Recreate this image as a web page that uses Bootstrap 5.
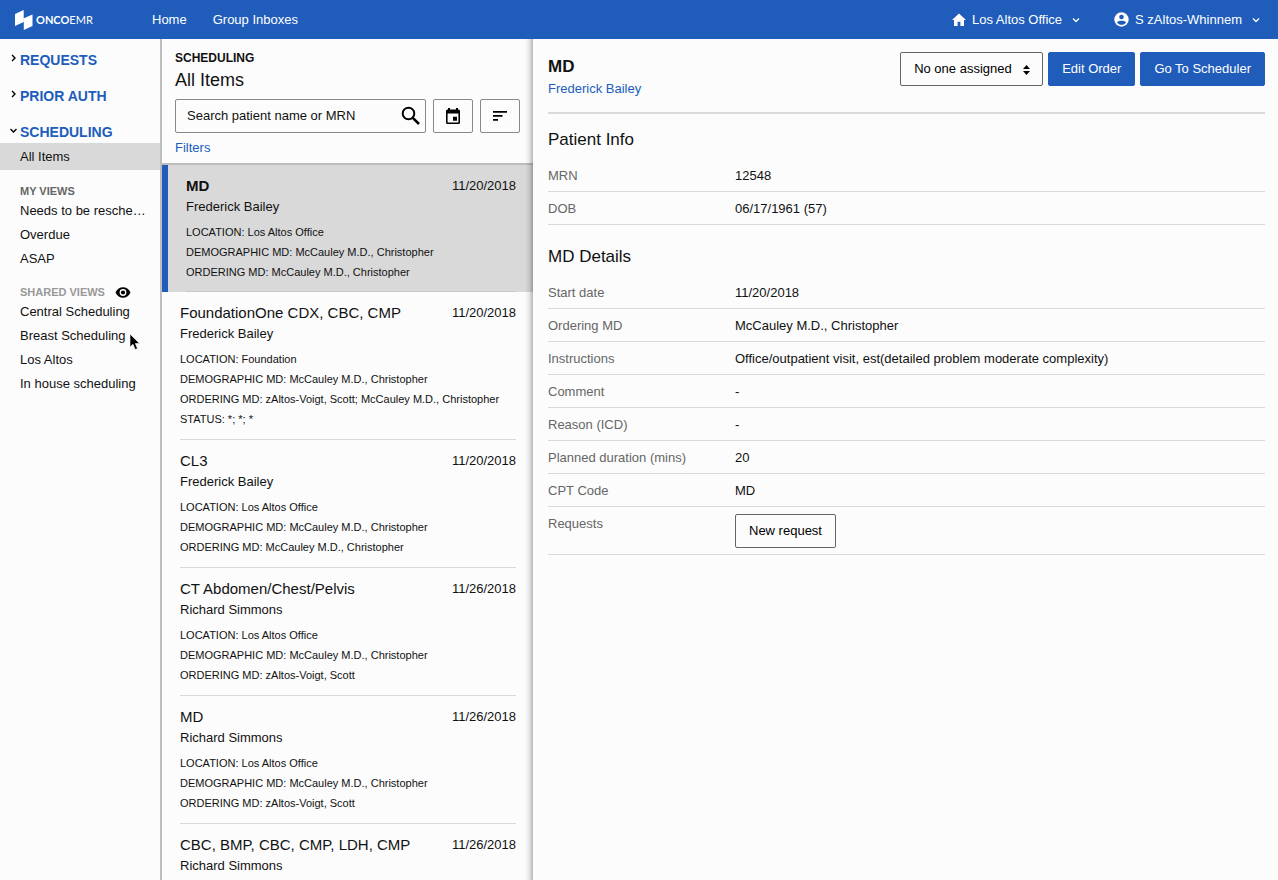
<!DOCTYPE html>
<html lang="en">
<head>
<meta charset="utf-8">
<meta name="viewport" content="width=device-width, initial-scale=1">
<title>OncoEMR - Scheduling</title>
<link rel="stylesheet" href="https://cdn.jsdelivr.net/npm/bootstrap@5.3.0/dist/css/bootstrap.min.css">
<style>
  :root { --brand: #205dbb; --ink: #111; --page: #fcfcfc; --line: #dadada; --rule: #bdbdbd; --picked: #d9d9d9; }
  body { font: 13px/20px "Liberation Sans", Arial, sans-serif; color: var(--ink); background: var(--page); }
  a { color: var(--brand); text-decoration: none; }
  svg { display: block; flex: none; }
  ul { list-style: none; margin: 0; padding: 0; }

  .topbar { height: 39px; background: var(--brand); padding: 0 18px 0 15px; }
  .topbar a, .topbar button { color: #fff; font-size: 13px; line-height: 20px; background: none; border: 0; padding: 0; }
  .topbar .brand-word { font: 700 11px/20px Lato, sans-serif; margin-left: 3px; }
  .brand-word span { font-weight: 400; }
  .brand-link { width: 137px; }
  .main-links { gap: 26px; }
  .account-links { gap: 34px; }
  .account-links button { gap: 6px; }

  .sidebar { width: 162px; border-right: 2px solid var(--rule); padding-top: 10px; }
  .group-toggle { font-weight: 700; font-size: 14px; line-height: 22px; color: var(--brand); background: none; border: 0; padding: 0 0 0 9px; margin: 0 0 14px; gap: 2px; }
  .group-toggle.open { margin-bottom: 0; }
  .group-toggle svg { margin-top: 5px; }
  .sidebar li a { color: var(--ink); display: block; padding: 0 14px 0 20px; line-height: 24px; }
  .sidebar li a.picked { background: var(--picked); line-height: 27px; }
  .side-title { font-size: 11px; line-height: 16px; font-weight: 700; color: #666; margin: 13px 0 0; padding-left: 20px; }
  .side-title.shared { color: #999; gap: 10px; }

  .queue { width: 371px; }
  .queue::after { content: ""; position: absolute; inset: 0 0 0 auto; width: 8px; background: linear-gradient(to right, rgba(0,0,0,0), rgba(0,0,0,.08) 50%, rgba(0,0,0,.28)); pointer-events: none; }
  .queue-head { padding: 9px 13px 5px; border-bottom: 2px solid var(--rule); }
  .queue-head .eyebrow { font-size: 12px; line-height: 20px; font-weight: 700; }
  .queue-head h1 { font-size: 18px; line-height: 24px; font-weight: 400; margin: 0 0 7px; }
  .tools { gap: 7px; margin-bottom: 5px; }
  .tools input { height: 34px; width: 100%; border: 1px solid #888; border-radius: 2px; padding: 0 36px 2px 11px; background: var(--page); color: var(--ink); font-size: 13px; }
  .tools input::placeholder { color: var(--ink); opacity: 1; }
  .tools .glass { right: 5px; top: 7px; }
  .tool-btn { width: 40px; height: 34px; border: 1px solid #888; border-radius: 2px; background: var(--page); padding: 0; color: #000; }

  .order { padding: 0 17px 0 18px; }
  .order > div { padding: 10px 0; border-bottom: 1px solid var(--line); }
  .order.picked { background: var(--picked); border-left: 6px solid var(--brand); }
  .order.picked > div { border-color: #c8c8c8; padding-bottom: 9px; }
  .order h2 { font-size: 15px; line-height: 22px; font-weight: 400; margin: 0; }
  .order.picked h2 { font-weight: 700; }
  .order time { line-height: 22px; }
  .order ul { font-size: 11px; line-height: 20px; margin-top: 5px; }

  .detail { padding: 13px 13px 0 15px; }
  .detail-head { border-bottom: 2px solid var(--line); margin-bottom: 14px; min-height: 62px; }
  .detail-head h1 { font-size: 17px; line-height: 24px; font-weight: 700; margin: 3px 0 0; }
  .detail-head a { line-height: 20px; display: block; }
  .actions { gap: 5px; }
  .btn-emr, .assignee { height: 34px; font-size: 13px; line-height: 20px; border-radius: 2px; border: 1px solid var(--brand); padding: 0 13px; }
  .btn-emr { background: var(--brand); color: #fff; }
  .btn-plain, .assignee { background: var(--page); color: #000; border-color: #666; }
  .assignee { appearance: none; width: 143px; }
  .updown { right: 13px; top: 13px; pointer-events: none; }
  .detail section + section { margin-top: 20px; }
  .detail h2 { font-size: 17px; line-height: 24px; font-weight: 400; margin: 0 0 7px; }
  .facts { width: 100%; }
  .facts tr { border-bottom: 1px solid var(--line); }
  .facts th { width: 187px; font-weight: 400; color: #666; }
  .facts th, .facts td { line-height: 16px; padding: 9px 0 7px; vertical-align: top; }
  .facts td.has-button { padding: 7px 0 6px; }
  .pointer { left: 129px; top: 333px; pointer-events: none; z-index: 5; }
</style>
</head>
<body>
<div class="d-flex flex-column vh-100 overflow-hidden position-relative">
  <header class="topbar d-flex align-items-center flex-shrink-0">
    <a href="#" class="brand-link d-flex align-items-center" aria-label="OncoEMR">
      <svg width="18" height="20" viewBox="0 0 18 20" fill="#fff"><path d="M0 4 8.700 0V12L0 16ZM8.800 8.300 17.500 4.500V16L8.800 20Z"/></svg>
      <span class="brand-word">ONCO<span>EMR</span></span>
    </a>
    <nav class="main-links d-flex"><a href="#">Home</a><a href="#">Group Inboxes</a></nav>
    <div class="account-links d-flex ms-auto">
      <button type="button" class="d-flex align-items-center">
        <svg width="14" height="13" viewBox="0 0 14 13" fill="#fff"><path d="M7 0.500 0 7H2V13H5.600V8.800H8.400V13H12V7H14Z"/></svg>
        Los Altos Office
        <svg class="ms-1" width="8" height="6" viewBox="0 0 8 6" fill="none" stroke="#fff" stroke-width="1.300"><path d="M1 1.500 4 4.500 7 1.500"/></svg>
      </button>
      <button type="button" class="d-flex align-items-center">
        <svg width="15" height="15" viewBox="0 0 15 15"><circle cx="7.500" cy="7.500" r="7.200" fill="#fff"/><circle cx="7.500" cy="5" r="2.300" fill="#205dbb"/><path d="M3 10.500C3.400 8.300 11.600 8.300 12 10.500 10 13.600 5 13.600 3 10.500Z" fill="#205dbb"/></svg>
        S zAltos-Whinnem
        <svg class="ms-1" width="8" height="6" viewBox="0 0 8 6" fill="none" stroke="#fff" stroke-width="1.300"><path d="M1 1.500 4 4.500 7 1.500"/></svg>
      </button>
    </div>
  </header>

  <div class="d-flex flex-grow-1 overflow-hidden">
    <nav class="sidebar flex-shrink-0" aria-label="Queues">
      <button type="button" class="group-toggle d-flex align-items-start"><svg width="9" height="9" viewBox="0 0 9 9" fill="none" stroke="#000" stroke-width="1.400"><path d="M3 1 6 4 3 7"/></svg>REQUESTS</button>
      <button type="button" class="group-toggle d-flex align-items-start"><svg width="9" height="9" viewBox="0 0 9 9" fill="none" stroke="#000" stroke-width="1.400"><path d="M3 1 6 4 3 7"/></svg>PRIOR AUTH</button>
      <button type="button" class="group-toggle open d-flex align-items-start"><svg width="9" height="9" viewBox="0 0 9 9" fill="none" stroke="#000" stroke-width="1.400"><path d="M1.500 3 4.500 6 7.500 3"/></svg>SCHEDULING</button>
      <ul><li><a href="#" class="picked">All Items</a></li></ul>
      <h3 class="side-title">MY VIEWS</h3>
      <ul>
        <li><a href="#" class="text-nowrap">Needs to be resche…</a></li>
        <li><a href="#">Overdue</a></li>
        <li><a href="#">ASAP</a></li>
      </ul>
      <h3 class="side-title shared d-flex align-items-center">SHARED VIEWS
        <svg width="16" height="11" viewBox="0 0 16 11"><path d="M0.500 5.500C3.500-1.500 12.500-1.500 15.500 5.500 12.500 12.500 3.500 12.500 0.500 5.500Z" fill="#000"/><circle cx="8" cy="5.500" r="3.400" fill="#fff"/><circle cx="8" cy="5.500" r="2.100" fill="#000"/></svg>
      </h3>
      <ul>
        <li><a href="#">Central Scheduling</a></li>
        <li><a href="#">Breast Scheduling</a></li>
        <li><a href="#">Los Altos</a></li>
        <li><a href="#">In house scheduling</a></li>
      </ul>
    </nav>

    <div class="queue d-flex flex-column flex-shrink-0 position-relative">
      <div class="queue-head flex-shrink-0">
        <div class="eyebrow">SCHEDULING</div>
        <h1>All Items</h1>
        <div class="tools d-flex">
          <div class="position-relative flex-grow-1">
            <input type="text" placeholder="Search patient name or MRN" aria-label="Search patient name or MRN">
            <svg class="glass position-absolute" width="20" height="20" viewBox="0 0 20 20" fill="none" stroke="#000"><circle cx="7.500" cy="7.500" r="5.800" stroke-width="2"/><path d="M11.800 11.800 18 18" stroke-width="2.500"/></svg>
          </div>
          <button type="button" class="tool-btn d-flex align-items-center justify-content-center" aria-label="Calendar"><svg width="16" height="16" viewBox="0 0 16 16"><path fill="currentColor" fill-rule="evenodd" d="M3 0H5V1.500H11V0H13V1.500H13.500Q15 1.500 15 3V14.500Q15 16 13.500 16H2.500Q1 16 1 14.500V3Q1 1.500 2.500 1.500H3ZM2.600 5.500V14.400H13.400V5.500ZM8 8.800H12V12.800H8Z"/></svg></button>
          <button type="button" class="tool-btn d-flex align-items-center justify-content-center" aria-label="Sort"><svg width="14" height="10" viewBox="0 0 14 10" fill="currentColor"><path d="M0 0H14V1.700H0ZM0 4H9.500V5.700H0ZM0 8H5V9.700H0Z"/></svg></button>
        </div>
        <a href="#">Filters</a>
      </div>
      <div class="overflow-hidden flex-grow-1">
        <article class="order picked"><div>
          <div class="d-flex justify-content-between"><h2>MD</h2><time>11/20/2018</time></div>
          Frederick Bailey
          <ul><li>LOCATION: Los Altos Office</li><li>DEMOGRAPHIC MD: McCauley M.D., Christopher</li><li>ORDERING MD: McCauley M.D., Christopher</li></ul>
        </div></article>
        <article class="order"><div>
          <div class="d-flex justify-content-between"><h2>FoundationOne CDX, CBC, CMP</h2><time>11/20/2018</time></div>
          Frederick Bailey
          <ul><li>LOCATION: Foundation</li><li>DEMOGRAPHIC MD: McCauley M.D., Christopher</li><li>ORDERING MD: zAltos-Voigt, Scott; McCauley M.D., Christopher</li><li>STATUS: *; *; *</li></ul>
        </div></article>
        <article class="order"><div>
          <div class="d-flex justify-content-between"><h2>CL3</h2><time>11/20/2018</time></div>
          Frederick Bailey
          <ul><li>LOCATION: Los Altos Office</li><li>DEMOGRAPHIC MD: McCauley M.D., Christopher</li><li>ORDERING MD: McCauley M.D., Christopher</li></ul>
        </div></article>
        <article class="order"><div>
          <div class="d-flex justify-content-between"><h2>CT Abdomen/Chest/Pelvis</h2><time>11/26/2018</time></div>
          Richard Simmons
          <ul><li>LOCATION: Los Altos Office</li><li>DEMOGRAPHIC MD: McCauley M.D., Christopher</li><li>ORDERING MD: zAltos-Voigt, Scott</li></ul>
        </div></article>
        <article class="order"><div>
          <div class="d-flex justify-content-between"><h2>MD</h2><time>11/26/2018</time></div>
          Richard Simmons
          <ul><li>LOCATION: Los Altos Office</li><li>DEMOGRAPHIC MD: McCauley M.D., Christopher</li><li>ORDERING MD: zAltos-Voigt, Scott</li></ul>
        </div></article>
        <article class="order"><div>
          <div class="d-flex justify-content-between"><h2>CBC, BMP, CBC, CMP, LDH, CMP</h2><time>11/26/2018</time></div>
          Richard Simmons
        </div></article>
      </div>
    </div>

    <main class="detail flex-grow-1">
      <div class="detail-head d-flex justify-content-between align-items-start">
        <div><h1>MD</h1><a href="#">Frederick Bailey</a></div>
        <div class="actions d-flex">
          <div class="position-relative">
            <select class="assignee" aria-label="Assignee"><option>No one assigned</option></select>
            <svg class="updown position-absolute" width="7" height="10" viewBox="0 0 7 10"><path d="M3.500 0 7 4H0ZM0 6H7L3.500 10Z"/></svg>
          </div>
          <button type="button" class="btn-emr">Edit Order</button>
          <button type="button" class="btn-emr">Go To Scheduler</button>
        </div>
      </div>
      <section>
        <h2>Patient Info</h2>
        <table class="facts">
          <tr><th scope="row">MRN</th><td>12548</td></tr>
          <tr><th scope="row">DOB</th><td>06/17/1961 (57)</td></tr>
        </table>
      </section>
      <section>
        <h2>MD Details</h2>
        <table class="facts">
          <tr><th scope="row">Start date</th><td>11/20/2018</td></tr>
          <tr><th scope="row">Ordering MD</th><td>McCauley M.D., Christopher</td></tr>
          <tr><th scope="row">Instructions</th><td>Office/outpatient visit, est(detailed problem moderate complexity)</td></tr>
          <tr><th scope="row">Comment</th><td>-</td></tr>
          <tr><th scope="row">Reason (ICD)</th><td>-</td></tr>
          <tr><th scope="row">Planned duration (mins)</th><td>20</td></tr>
          <tr><th scope="row">CPT Code</th><td>MD</td></tr>
          <tr><th scope="row">Requests</th><td class="has-button"><button type="button" class="btn-emr btn-plain">New request</button></td></tr>
        </table>
      </section>
    </main>
  </div>

  <svg class="pointer position-absolute" width="12" height="18" viewBox="0 0 12 18"><path d="M1 1V14L4 11.300 6.200 16.500 8.500 15.500 6.300 10.500H10.500Z" stroke="#fff" stroke-width=".6"/></svg>
</div>
<script src="https://cdn.jsdelivr.net/npm/bootstrap@5.3.0/dist/js/bootstrap.bundle.min.js"></script>
</body>
</html>
